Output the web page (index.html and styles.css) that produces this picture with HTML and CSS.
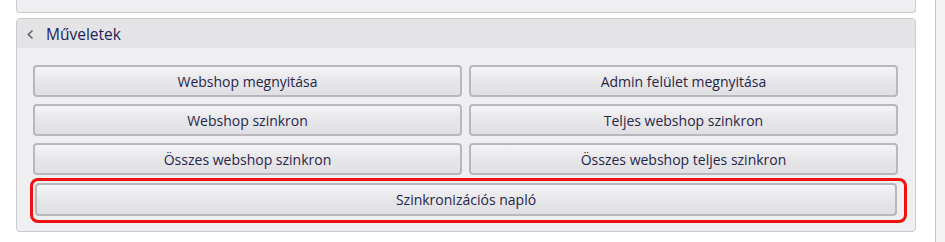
FILE: index.html
```html
<!DOCTYPE html>
<html lang="hu">

<head>
    <meta charset="UTF-8">
    <title>Műveletek</title>
    <link rel="stylesheet" href="styles.css">
</head>

<body>
    <div class="page">
        <div class="main">
            <div class="panel panel-prev"></div>

            <div class="panel">
                <div class="panel-header">
                    <svg class="chevron" width="6" height="9" viewBox="0 0 6 9" fill="none"
                        stroke="currentColor" stroke-width="1.7" stroke-linecap="round" stroke-linejoin="round">
                        <polyline points="5 1 1.3 4.5 5 8"></polyline>
                    </svg>
                    <span class="panel-title">Műveletek</span>
                </div>
                <div class="panel-body">
                    <div class="button-grid">
                        <button class="btn">Webshop megnyitása</button>
                        <button class="btn">Admin felület megnyitása</button>
                        <button class="btn">Webshop szinkron</button>
                        <button class="btn">Teljes webshop szinkron</button>
                        <button class="btn">Összes webshop szinkron</button>
                        <button class="btn">Összes webshop teljes szinkron</button>
                    </div>
                    <div class="highlight">
                        <button class="btn btn-wide">Szinkronizációs napló</button>
                    </div>
                </div>
            </div>
        </div>
        <div class="scrollbar"></div>
    </div>
</body>

</html>
```

FILE: styles.css
```css
*,
*::before,
*::after {
    box-sizing: border-box;
    margin: 0;
    padding: 0;
}

:root {
    --panel-bg: #efeff1;
    --header-bg: #e4e4e7;
    --border: #cbcbcf;
    --btn-border: #b8b8bc;
    --text: #26264a;
}

body {
    width: 945px;
    height: 242px;
    overflow: hidden;
    background: #ffffff;
    font-family: "Open Sans", "DejaVu Sans", sans-serif;
    color: var(--text);
}

.page {
    display: flex;
    height: 100%;
}

.main {
    width: 935px;
    padding-left: 16px;
    padding-right: 19px;
}

.panel {
    background: var(--panel-bg);
    border: 1px solid var(--border);
    border-radius: 4px;
    height: 214px;
}

.panel-prev {
    height: 13px;
    border-top: none;
    border-radius: 0 0 4px 4px;
    margin-bottom: 5px;
}

.panel-header {
    height: 29px;
    background: var(--header-bg);
    border-radius: 3px 3px 0 0;
    display: flex;
    align-items: center;
    padding-left: 10px;
    gap: 13px;
}

.chevron {
    color: #66666a;
    margin-top: 1px;
}

.panel-title {
    font-size: 15.5px;
    color: #22225a;
}

.panel-body {
    padding: 17px 17px 8px 16px;
}

.button-grid {
    display: grid;
    grid-template-columns: 1fr 1fr;
    gap: 7px 7px;
}

.btn {
    height: 32px;
    font-family: inherit;
    font-size: 14px;
    color: var(--text);
    background: linear-gradient(#f4f4f6, #e6e6e9 55%, #e0e0e4);
    border: 2px solid var(--btn-border);
    border-radius: 4px;
    cursor: pointer;
}

.highlight {
    margin: 3px -9px 0 -3px;
    padding: 2px 7px 4px 2px;
    border: 3px solid #f01010;
    border-radius: 8px;
}

.btn-wide {
    width: 100%;
    height: 33px;
}

.scrollbar {
    width: 10px;
    background: #f3f3f4;
    border-left: 1px solid #c8c8cc;
}
```
